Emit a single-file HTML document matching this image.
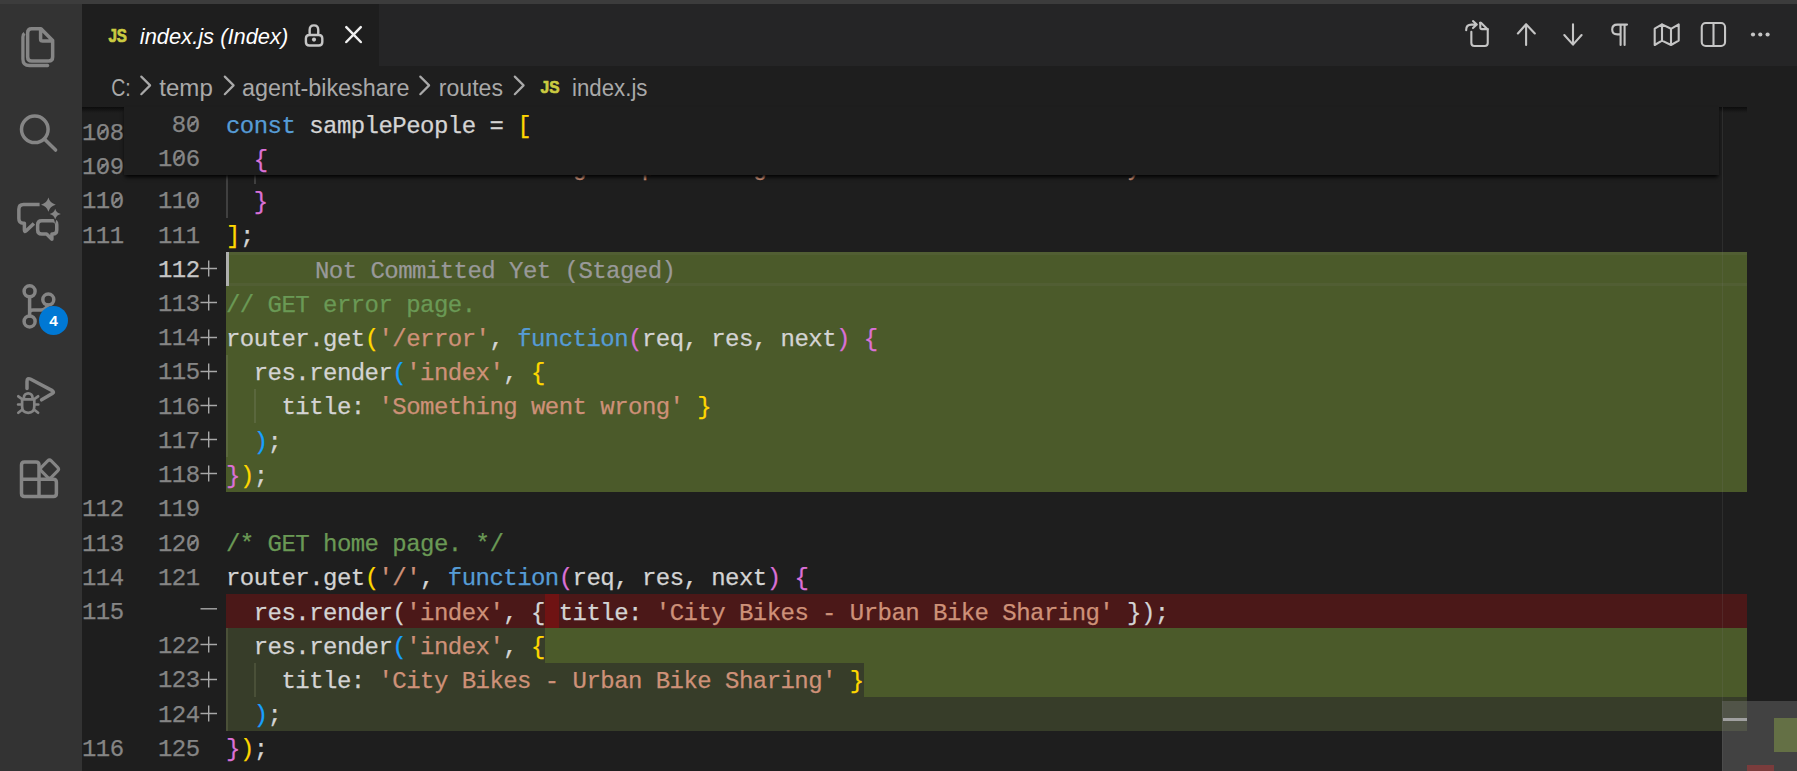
<!DOCTYPE html><html><head><meta charset="utf-8"><style>
*{margin:0;padding:0;box-sizing:border-box}
html,body{width:1797px;height:771px;overflow:hidden;background:#1e1e1e;position:relative}
.abs{position:absolute}
.code{font-family:"Liberation Mono",monospace;font-size:24px;letter-spacing:-0.54px;white-space:pre;line-height:34.21px;color:#d4d4d4;-webkit-text-stroke:0.25px currentColor}
.k{color:#569cd6}.s{color:#ce9178}.c{color:#6a9955}.n{color:#d4d4d4}
.b1{color:#ffd700}.b2{color:#da70d6}.b3{color:#179fff}
.ln{color:#858585;text-align:right}
.ui{font-family:"Liberation Sans",sans-serif}
.z{position:relative}.z::after{content:"";position:absolute;left:1.9px;top:10.3px;width:11px;height:1.6px;background:currentColor;transform:rotate(-42deg)}
</style></head><body>

<div class="abs" style="left:0;top:0;width:1797px;height:4px;background:#3c3c3c"></div>
<div class="abs" style="left:0;top:4px;width:82px;height:767px;background:#333333"></div>
<div class="abs" style="left:82px;top:4px;width:1715px;height:62px;background:#252526"></div>
<div class="abs" style="left:82px;top:4px;width:297px;height:62px;background:#1e1e1e"></div>
<div class="abs" style="left:226px;top:252.04px;width:1521px;height:34.21px;background:#4b5a2a"></div>
<div class="abs" style="left:226px;top:286.25px;width:1521px;height:34.21px;background:#4b5a2a"></div>
<div class="abs" style="left:226px;top:320.46px;width:1521px;height:34.21px;background:#4b5a2a"></div>
<div class="abs" style="left:226px;top:354.67px;width:1521px;height:34.21px;background:#4b5a2a"></div>
<div class="abs" style="left:226px;top:388.88px;width:1521px;height:34.21px;background:#4b5a2a"></div>
<div class="abs" style="left:226px;top:423.09px;width:1521px;height:34.21px;background:#4b5a2a"></div>
<div class="abs" style="left:226px;top:457.30px;width:1521px;height:34.21px;background:#4b5a2a"></div>
<div class="abs" style="left:226px;top:594.14px;width:1521px;height:34.21px;background:#4b1818"></div>
<div class="abs" style="left:544.78px;top:594.14px;width:13.86px;height:34.21px;background:#6f1313"></div>
<div class="abs" style="left:226px;top:628.35px;width:1521px;height:34.21px;background:#373d29"></div>
<div class="abs" style="left:544.78px;top:628.35px;width:1202.22px;height:34.21px;background:#4b5a2a"></div>
<div class="abs" style="left:226px;top:662.56px;width:1521px;height:34.21px;background:#373d29"></div>
<div class="abs" style="left:863.56px;top:662.56px;width:883.44px;height:34.21px;background:#4b5a2a"></div>
<div class="abs" style="left:226px;top:696.77px;width:1521px;height:34.21px;background:#373d29"></div>
<div class="abs code ln" style="left:58.5px;width:65px;top:117.00px">1<span class="z">0</span>8</div>
<div class="abs code ln" style="left:58.5px;width:65px;top:151.21px">1<span class="z">0</span>9</div>
<div class="abs code ln" style="left:58.5px;width:65px;top:185.42px">11<span class="z">0</span></div>
<div class="abs code ln" style="left:128.6px;width:71px;top:185.42px;color:#858585">11<span class="z">0</span></div>
<div class="abs code" style="left:226px;top:186.12px"><span class="n">  </span><span class="b2">}</span></div>
<div class="abs code ln" style="left:58.5px;width:65px;top:219.63px">111</div>
<div class="abs code ln" style="left:128.6px;width:71px;top:219.63px;color:#858585">111</div>
<div class="abs code" style="left:226px;top:220.33px"><span class="b1">]</span><span class="n">;</span></div>
<div class="abs code ln" style="left:128.6px;width:71px;top:253.84px;color:#c6c6c6">112</div>
<svg class="abs" style="left:200px;top:260.14px" width="18" height="18"><path d="M8.7 0.5V16.5M0.5 8.5H17" stroke="#a8a8a8" stroke-width="1.4" fill="none"/></svg>
<div class="abs code ln" style="left:128.6px;width:71px;top:288.05px;color:#858585">113</div>
<div class="abs code" style="left:226px;top:288.75px"><span class="c">// GET error page.</span></div>
<svg class="abs" style="left:200px;top:294.35px" width="18" height="18"><path d="M8.7 0.5V16.5M0.5 8.5H17" stroke="#a8a8a8" stroke-width="1.4" fill="none"/></svg>
<div class="abs code ln" style="left:128.6px;width:71px;top:322.26px;color:#858585">114</div>
<div class="abs code" style="left:226px;top:322.96px"><span class="n">router.get</span><span class="b1">(</span><span class="s">'/error'</span><span class="n">, </span><span class="k">function</span><span class="b2">(</span><span class="n">req, res, next</span><span class="b2">)</span><span class="n"> </span><span class="b2">{</span></div>
<svg class="abs" style="left:200px;top:328.56px" width="18" height="18"><path d="M8.7 0.5V16.5M0.5 8.5H17" stroke="#a8a8a8" stroke-width="1.4" fill="none"/></svg>
<div class="abs code ln" style="left:128.6px;width:71px;top:356.47px;color:#858585">115</div>
<div class="abs code" style="left:226px;top:357.17px"><span class="n">  res.render</span><span class="b3">(</span><span class="s">'index'</span><span class="n">, </span><span class="b1">{</span></div>
<svg class="abs" style="left:200px;top:362.77px" width="18" height="18"><path d="M8.7 0.5V16.5M0.5 8.5H17" stroke="#a8a8a8" stroke-width="1.4" fill="none"/></svg>
<div class="abs code ln" style="left:128.6px;width:71px;top:390.68px;color:#858585">116</div>
<div class="abs code" style="left:226px;top:391.38px"><span class="n">    title: </span><span class="s">'Something went wrong'</span><span class="n"> </span><span class="b1">}</span></div>
<svg class="abs" style="left:200px;top:396.98px" width="18" height="18"><path d="M8.7 0.5V16.5M0.5 8.5H17" stroke="#a8a8a8" stroke-width="1.4" fill="none"/></svg>
<div class="abs code ln" style="left:128.6px;width:71px;top:424.89px;color:#858585">117</div>
<div class="abs code" style="left:226px;top:425.59px"><span class="n">  </span><span class="b3">)</span><span class="n">;</span></div>
<svg class="abs" style="left:200px;top:431.19px" width="18" height="18"><path d="M8.7 0.5V16.5M0.5 8.5H17" stroke="#a8a8a8" stroke-width="1.4" fill="none"/></svg>
<div class="abs code ln" style="left:128.6px;width:71px;top:459.10px;color:#858585">118</div>
<div class="abs code" style="left:226px;top:459.80px"><span class="b2">}</span><span class="b1">)</span><span class="n">;</span></div>
<svg class="abs" style="left:200px;top:465.40px" width="18" height="18"><path d="M8.7 0.5V16.5M0.5 8.5H17" stroke="#a8a8a8" stroke-width="1.4" fill="none"/></svg>
<div class="abs code ln" style="left:58.5px;width:65px;top:493.31px">112</div>
<div class="abs code ln" style="left:128.6px;width:71px;top:493.31px;color:#858585">119</div>
<div class="abs code ln" style="left:58.5px;width:65px;top:527.52px">113</div>
<div class="abs code ln" style="left:128.6px;width:71px;top:527.52px;color:#858585">12<span class="z">0</span></div>
<div class="abs code" style="left:226px;top:528.22px"><span class="c">/* GET home page. */</span></div>
<div class="abs code ln" style="left:58.5px;width:65px;top:561.73px">114</div>
<div class="abs code ln" style="left:128.6px;width:71px;top:561.73px;color:#858585">121</div>
<div class="abs code" style="left:226px;top:562.43px"><span class="n">router.get</span><span class="b1">(</span><span class="s">'/'</span><span class="n">, </span><span class="k">function</span><span class="b2">(</span><span class="n">req, res, next</span><span class="b2">)</span><span class="n"> </span><span class="b2">{</span></div>
<div class="abs code ln" style="left:58.5px;width:65px;top:595.94px">115</div>
<div class="abs code" style="left:226px;top:596.64px"><span class="n">  res.render(</span><span class="s">'index'</span><span class="n">, { title: </span><span class="s">'City Bikes - Urban Bike Sharing'</span><span class="n"> });</span></div>
<svg class="abs" style="left:200px;top:602.24px" width="18" height="18"><path d="M0.5 6.8H17" stroke="#a8a8a8" stroke-width="1.4" fill="none"/></svg>
<div class="abs code ln" style="left:128.6px;width:71px;top:630.15px;color:#858585">122</div>
<div class="abs code" style="left:226px;top:630.85px"><span class="n">  res.render</span><span class="b3">(</span><span class="s">'index'</span><span class="n">, </span><span class="b1">{</span></div>
<svg class="abs" style="left:200px;top:636.45px" width="18" height="18"><path d="M8.7 0.5V16.5M0.5 8.5H17" stroke="#a8a8a8" stroke-width="1.4" fill="none"/></svg>
<div class="abs code ln" style="left:128.6px;width:71px;top:664.36px;color:#858585">123</div>
<div class="abs code" style="left:226px;top:665.06px"><span class="n">    title: </span><span class="s">'City Bikes - Urban Bike Sharing'</span><span class="n"> </span><span class="b1">}</span></div>
<svg class="abs" style="left:200px;top:670.66px" width="18" height="18"><path d="M8.7 0.5V16.5M0.5 8.5H17" stroke="#a8a8a8" stroke-width="1.4" fill="none"/></svg>
<div class="abs code ln" style="left:128.6px;width:71px;top:698.57px;color:#858585">124</div>
<div class="abs code" style="left:226px;top:699.27px"><span class="n">  </span><span class="b3">)</span><span class="n">;</span></div>
<svg class="abs" style="left:200px;top:704.87px" width="18" height="18"><path d="M8.7 0.5V16.5M0.5 8.5H17" stroke="#a8a8a8" stroke-width="1.4" fill="none"/></svg>
<div class="abs code ln" style="left:58.5px;width:65px;top:732.78px">116</div>
<div class="abs code ln" style="left:128.6px;width:71px;top:732.78px;color:#858585">125</div>
<div class="abs code" style="left:226px;top:733.48px"><span class="b2">}</span><span class="b1">)</span><span class="n">;</span></div>
<div class="abs code" style="left:315px;top:254.54px;color:#999999">Not Committed Yet (Staged)</div>
<div class="abs" style="left:226px;top:252.04px;width:3px;height:34.21px;background:#aeafad"></div>
<div class="abs" style="left:226px;top:149.41px;width:1.5px;height:68.42px;background:#404040"></div>
<div class="abs" style="left:254px;top:388.88px;width:1.5px;height:34.21px;background:#5a673d"></div>
<div class="abs" style="left:254px;top:149.41px;width:1.5px;height:34.21px;background:#404040"></div>
<div class="abs code" style="left:226px;top:151.91px;color:#ce9178">                         g    p       g                          y</div>
<div class="abs" style="left:229px;top:252px;width:1518px;height:2.8px;background:#515e33"></div>
<div class="abs" style="left:229px;top:283px;width:1518px;height:3px;background:#515e33"></div>
<div class="abs" style="left:254px;top:662.56px;width:1.5px;height:34.21px;background:#4a5038"></div>
<div class="abs" style="left:226px;top:354.67px;width:1.5px;height:102.63px;background:#5a673d"></div>
<div class="abs" style="left:226px;top:628.35px;width:1.5px;height:102.63px;background:#4a5038"></div>
<div class="abs" style="left:82px;top:107px;width:1665px;height:6px;background:linear-gradient(#000000 0%,rgba(0,0,0,0) 100%);opacity:.6"></div>
<div class="abs" style="left:124px;top:107px;width:1595px;height:68.42px;background:#1e1e1e;box-shadow:0 3px 4px -1px #000"></div>
<div class="abs code ln" style="left:128.6px;width:71px;top:108.80px">8<span class="z">0</span></div>
<div class="abs code" style="left:226px;top:109.50px"><span class="k">const</span><span class="n"> samplePeople = </span><span class="b1">[</span></div>
<div class="abs code ln" style="left:128.6px;width:71px;top:143.01px">1<span class="z">0</span>6</div>
<div class="abs code" style="left:226px;top:143.71px"><span class="n">  </span><span class="b2">{</span></div>
<div class="abs" style="left:1722px;top:107px;width:1px;height:664px;background:rgba(127,127,127,0.17)"></div>
<div class="abs" style="left:1722px;top:701px;width:75px;height:70px;background:rgba(121,121,121,0.4)"></div>
<div class="abs" style="left:1723px;top:718px;width:24px;height:3px;background:#a0a0a0"></div>
<div class="abs" style="left:1774px;top:718px;width:23px;height:34px;background:#647045"></div>
<div class="abs" style="left:1747px;top:765px;width:27px;height:6px;background:#7a3c3c"></div>
<svg class="abs" style="left:0;top:0" width="1797" height="771" viewBox="0 0 1797 771"><text stroke="#cbcb41" stroke-width="0.7" x="108.4" y="42" font-family="Liberation Sans" font-size="18.5" font-style="normal" font-weight="bold" fill="#cbcb41" textLength="18.6" lengthAdjust="spacingAndGlyphs">JS</text><text x="139.8" y="44.2" font-family="Liberation Sans" font-size="22" font-style="italic" font-weight="normal" fill="#ffffff" textLength="148.5" lengthAdjust="spacingAndGlyphs">index.js (Index)</text><text x="111.2" y="96" font-family="Liberation Sans" font-size="23" font-style="normal" font-weight="normal" fill="#a9a9a9" textLength="19.5" lengthAdjust="spacingAndGlyphs">C:</text><text x="159.3" y="96" font-family="Liberation Sans" font-size="23" font-style="normal" font-weight="normal" fill="#a9a9a9" textLength="53.5" lengthAdjust="spacingAndGlyphs">temp</text><text x="242" y="96" font-family="Liberation Sans" font-size="23" font-style="normal" font-weight="normal" fill="#a9a9a9" textLength="167.5" lengthAdjust="spacingAndGlyphs">agent-bikeshare</text><text x="438.8" y="96" font-family="Liberation Sans" font-size="23" font-style="normal" font-weight="normal" fill="#a9a9a9" textLength="64.2" lengthAdjust="spacingAndGlyphs">routes</text><text stroke="#cbcb41" stroke-width="0.7" x="540.6" y="92.7" font-family="Liberation Sans" font-size="17.3" font-style="normal" font-weight="bold" fill="#cbcb41" textLength="19" lengthAdjust="spacingAndGlyphs">JS</text><text x="572" y="96" font-family="Liberation Sans" font-size="23" font-style="normal" font-weight="normal" fill="#a9a9a9" textLength="75.5" lengthAdjust="spacingAndGlyphs">index.js</text>
<g fill="none" stroke="#a9a9a9" stroke-width="2.2" stroke-linecap="round" stroke-linejoin="round">
<path d="M141.3 76.6 L150.1 85.4 L141.3 94.2"/>
<path d="M224.8 76.6 L233.6 85.4 L224.8 94.2"/>
<path d="M420.3 76.6 L429.1 85.4 L420.3 94.2"/>
<path d="M514.8 76.6 L523.6 85.4 L514.8 94.2"/>
</g>
<g fill="none" stroke="#858585" stroke-width="3.5" stroke-linecap="round" stroke-linejoin="round">
<path d="M41 28.85 H31.65 Q27.65 28.85 27.65 32.85 V57.05 Q27.65 61.05 31.65 61.05 H48.65 Q52.65 61.05 52.65 57.05 V40.5 Z M40.6 28.85 V39 Q40.6 41.1 42.7 41.1 H52.65"/>
<path stroke-linecap="butt" stroke-width="3.3" d="M24.5 33.4 Q22.9 34.6 22.9 37 V59 Q22.9 65.5 29.4 65.5 H47.2"/><path stroke-width="3.3" d="M47.2 65.5 H47.6"/>
<circle cx="34.8" cy="129.3" r="13.3"/>
<path d="M44.6 139.2 L55.6 150.1"/>
<path stroke-linecap="butt" d="M39.6 204.5 H23.6 Q18.85 204.5 18.85 209.2 V218.6 Q18.85 223.3 23.3 223.3 H24.4 V230 Q24.4 232.6 26.5 230.6 L33.9 223.4"/>
<path d="M37.65 224.75 Q37.65 220.75 41.65 220.75 H52.75 Q56.75 220.75 56.75 224.75 V230.05 Q56.75 234.05 52.75 234.05 H51.9 V239.2 L46.6 234.05 H41.65 Q37.65 234.05 37.65 230.05 Z"/>
<circle cx="29.6" cy="291.3" r="5.5"/>
<circle cx="29.6" cy="321.4" r="5.5"/>
<circle cx="48.3" cy="299.6" r="5.5"/>
<path d="M29.6 296.8 V315.9 M29.6 313 Q29.6 310 33 310 H41 Q46 310 47.5 305"/>
<path d="M27 388.5 V381.5 Q27 377.3 30.8 379.3 L52.3 390.6 Q54.6 392.2 52.3 393.6 L41.6 399.8"/>
<path stroke-width="2.7" d="M22.1 399.4 H34.3 M22.1 399.4 V406.6 Q22.1 412.8 28.2 412.8 Q34.3 412.8 34.3 406.6 V399.4 M23.9 399.4 V397.6 A4.3 4.3 0 0 1 32.5 397.6 V399.4 M18.3 396.3 L22.1 399.1 M18.1 404.5 H22.1 M18.3 412.7 L22.1 409.8 M38.1 396.3 L34.3 399.1 M38.3 404.5 H34.3 M38.1 412.7 L34.3 409.8"/>
<path d="M39 479.3 V465 Q39 462 36 462 H24.5 Q21.5 462 21.5 465 V493.4 Q21.5 496.4 24.5 496.4 H53.4 Q56.4 496.4 56.4 493.4 V482.3 Q56.4 479.3 53.4 479.3 H21.5 M39 479.3 V496.4"/>
<path stroke-width="3.1" d="M47.70 460.90 Q49.5 459.1 51.30 460.90 L57.70 467.30 Q59.5 469.1 57.70 470.90 L51.30 477.30 Q49.5 479.1 47.70 477.30 L41.30 470.90 Q39.5 469.1 41.30 467.30 Z"/>
</g>
<g fill="#858585" stroke="#333333" stroke-width="2.2" paint-order="stroke">
<path d="M48.40 197.60 Q49.88 203.28 55.80 204.70 Q49.88 206.12 48.40 211.80 Q46.92 206.12 41.00 204.70 Q46.92 203.28 48.40 197.60 Z"/>
<path d="M55.20 208.80 Q56.34 213.04 60.90 214.10 Q56.34 215.16 55.20 219.40 Q54.06 215.16 49.50 214.10 Q54.06 213.04 55.20 208.80 Z"/>
</g>
<circle cx="53.5" cy="320.6" r="14.5" fill="#0078d4"/>
<text x="53.5" y="326.2" font-family="Liberation Sans" font-weight="bold" font-size="15.5" fill="#ffffff" text-anchor="middle">4</text>
<g fill="none" stroke="#c5c5c5" stroke-width="2.1" stroke-linecap="round" stroke-linejoin="round">
<path d="M1471.35 31.8 V43 Q1471.35 46.05 1474.4 46.05 H1484.7 Q1487.75 46.05 1487.75 43 V29.5 L1481 22.75 H1480.2"/>
<path d="M1480.3 22.75 V27.4 Q1480.3 29.1 1482 29.1 H1487.75"/>
<path d="M1466.2 30.3 V29.8 Q1466.2 24.6 1471.4 24.6 H1476.6 M1473 21.1 L1476.8 24.6 L1473 28.1"/>
<path d="M1526.1 44.9 V24.2 M1517.9 33.5 L1526.1 24.2 L1534.8 33.5"/>
<path d="M1573 24.2 V44.6 M1564.3 35 L1573 44.6 L1581.6 35"/>
<path d="M1620.6 45 V24.6 M1624.6 45 V24.6 M1627 24.6 H1617.3 Q1612.2 24.6 1612.2 29.5 Q1612.2 34.4 1617.3 34.4 H1620.6"/>
<path d="M1654.7 28.6 L1662 24.4 L1671 28.8 L1678.7 24.4 V40.6 L1671 45 L1662 40.6 L1654.7 45 Z M1662 24.4 V40.6 M1671 28.8 V45"/>
<rect x="1701.75" y="23" width="23.3" height="23" rx="4"/>
<path d="M1713.5 23 V46"/>
<path stroke-width="2.4" d="M305.9 38.5 V42 Q305.9 45.5 309.4 45.5 H318.8 Q322.3 45.5 322.3 42 V38.5 Q322.3 35 318.8 35 H309.4 Q305.9 35 305.9 38.5 Z M309.65 35 V30 Q309.65 25.4 313.95 25.4 Q318.25 25.4 318.25 30 V35"/>
</g>
<circle cx="314" cy="39.6" r="2.05" fill="#c5c5c5"/>
<g fill="#c5c5c5"><circle cx="1753" cy="34.5" r="2.1"/><circle cx="1760.3" cy="34.5" r="2.1"/><circle cx="1767.6" cy="34.5" r="2.1"/></g>
<path d="M346.3 27.1 L360.8 42 M360.8 27.1 L346.3 42" stroke="#f0f0f0" stroke-width="2.5" stroke-linecap="round"/>
</svg>
</body></html>
